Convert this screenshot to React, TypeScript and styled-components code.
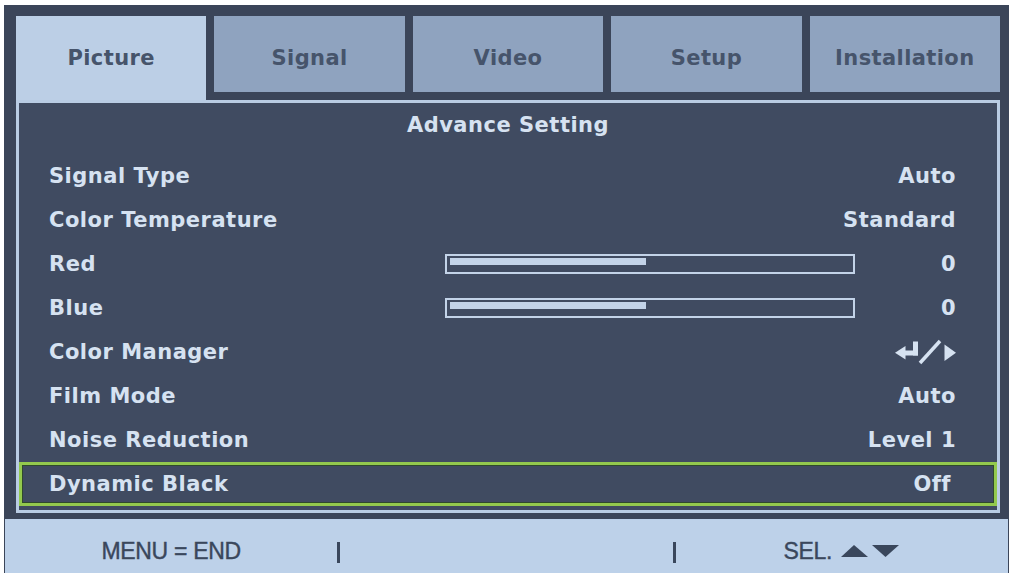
import React from 'react';
import styled, { createGlobalStyle } from 'styled-components';

const GlobalStyle = createGlobalStyle`
  html, body {
    margin: 0;
    padding: 0;
    background: #ffffff;
    overflow: hidden;
    height: 573px;
  }
`;

const Frame = styled.div`
  margin: 5px 0 0 4px;
  width: 1005px;
  height: 580px;
  box-sizing: border-box;
  background: #3b4559;
  padding: 11px 9px 0 12px;
  display: flex;
  flex-direction: column;
  font-family: 'DejaVu Sans', 'Liberation Sans', sans-serif;
`;

const TabRow = styled.div`
  display: flex;
  gap: 8px;
  align-items: flex-start;
  height: 84px;
`;

const Tab = styled.div<{ active?: boolean }>`
  flex: 1;
  height: ${(p) => (p.active ? '84px' : '76px')};
  background: ${(p) => (p.active ? '#bccfe6' : '#8fa3bf')};
  color: #46546b;
  font-weight: bold;
  font-size: 21px;
  letter-spacing: 0.4px;
  display: flex;
  justify-content: center;
  align-items: flex-start;
  padding-top: 30px;
  box-sizing: border-box;
`;

const Panel = styled.div`
  border: 3px solid #b9cce3;
  background: #404b61;
  height: 413px;
  box-sizing: border-box;
  display: flex;
  flex-direction: column;
  color: #d6e2f1;
  font-weight: bold;
  font-size: 21px;
  letter-spacing: 0.5px;
`;

const Title = styled.div`
  height: 44px;
  display: flex;
  align-items: center;
  justify-content: center;
  margin-bottom: 7px;
`;

const Row = styled.div<{ selected?: boolean }>`
  height: 44px;
  box-sizing: border-box;
  display: grid;
  grid-template-columns: 1fr 410px 101px;
  align-items: center;
  padding: 0 ${(p) => (p.selected ? '43px' : '38px')} 0 27px;
  border: 3px solid ${(p) => (p.selected ? '#93c94d' : 'transparent')};
  box-shadow: ${(p) => (p.selected ? 'inset 0 0 0 1px #2f4a2c' : 'none')};
`;

const Label = styled.span`
  grid-column: 1;
  white-space: nowrap;
`;

const Value = styled.span<{ wide?: boolean }>`
  grid-column: ${(p) => (p.wide ? '2 / 4' : '3')};
  justify-self: end;
  white-space: nowrap;
  display: flex;
  align-items: center;
`;

const SliderTrack = styled.div`
  grid-column: 2;
  height: 20px;
  border: 2px solid #c3d3e8;
  box-sizing: border-box;
  padding: 2px 3px;
`;

const SliderFill = styled.div`
  height: 7px;
  background: #c3d3e8;
`;

const Bar = styled.div`
  margin: 6px -8px 0 -11px;
  height: 62px;
  background: #bdd1e9;
  display: grid;
  grid-template-columns: 1fr 3px 1fr 3px 1fr;
  align-items: center;
  color: #3a475c;
  font-family: 'Liberation Sans', Arial, sans-serif;
  font-size: 23px;
  letter-spacing: -0.3px;
  -webkit-text-stroke: 0.4px #3a475c;
`;

const BarCell = styled.div`
  display: flex;
  justify-content: center;
  align-items: center;
  gap: 8px;
  padding-top: 2px;
`;

const Divider = styled.div`
  width: 3px;
  height: 21px;
  margin-top: 4px;
  background: #3a475c;
`;

const EnterIcon = () => (
  <svg width="66" height="28" viewBox="0 0 66 28" style={{ marginRight: -2 }}>
    <polygon points="3,14.7 13.5,8 13.5,21.5" fill="#d6e2f1" />
    <rect x="12" y="12.5" width="14" height="5" fill="#d6e2f1" />
    <rect x="21" y="3.5" width="5" height="14" fill="#d6e2f1" />
    <line x1="28" y1="25" x2="48" y2="3" stroke="#d6e2f1" strokeWidth="3.5" />
    <polygon points="52.5,6.5 52.5,23 64,14.7" fill="#d6e2f1" />
  </svg>
);

const Arrows = () => (
  <svg width="60" height="14" viewBox="0 0 60 14">
    <polygon points="1,13 14,1 28,13" fill="#3a475c" />
    <polygon points="32,1 59,1 45.5,13" fill="#3a475c" />
  </svg>
);

const tabs = ['Picture', 'Signal', 'Video', 'Setup', 'Installation'];

type Item = {
  label: string;
  value?: string;
  slider?: number;
  icon?: boolean;
  selected?: boolean;
};

const items: Item[] = [
  { label: 'Signal Type', value: 'Auto' },
  { label: 'Color Temperature', value: 'Standard' },
  { label: 'Red', value: '0', slider: 0.49 },
  { label: 'Blue', value: '0', slider: 0.49 },
  { label: 'Color Manager', icon: true },
  { label: 'Film Mode', value: 'Auto' },
  { label: 'Noise Reduction', value: 'Level 1' },
  { label: 'Dynamic Black', value: 'Off', selected: true },
];

export default function App() {
  return (
    <>
      <GlobalStyle />
      <Frame>
        <TabRow>
          {tabs.map((t, i) => (
            <Tab key={t} active={i === 0}>
              {t}
            </Tab>
          ))}
        </TabRow>
        <Panel>
          <Title>Advance Setting</Title>
          {items.map((it) => (
            <Row key={it.label} selected={it.selected}>
              <Label>{it.label}</Label>
              {it.slider !== undefined && (
                <SliderTrack>
                  <SliderFill style={{ width: `${it.slider * 100}%` }} />
                </SliderTrack>
              )}
              {it.icon ? (
                <Value wide>
                  <EnterIcon />
                </Value>
              ) : (
                <Value wide={it.slider === undefined}>{it.value}</Value>
              )}
            </Row>
          ))}
        </Panel>
        <Bar>
          <BarCell>MENU = END</BarCell>
          <Divider />
          <BarCell />
          <Divider />
          <BarCell>
            SEL.
            <Arrows />
          </BarCell>
        </Bar>
      </Frame>
    </>
  );
}
